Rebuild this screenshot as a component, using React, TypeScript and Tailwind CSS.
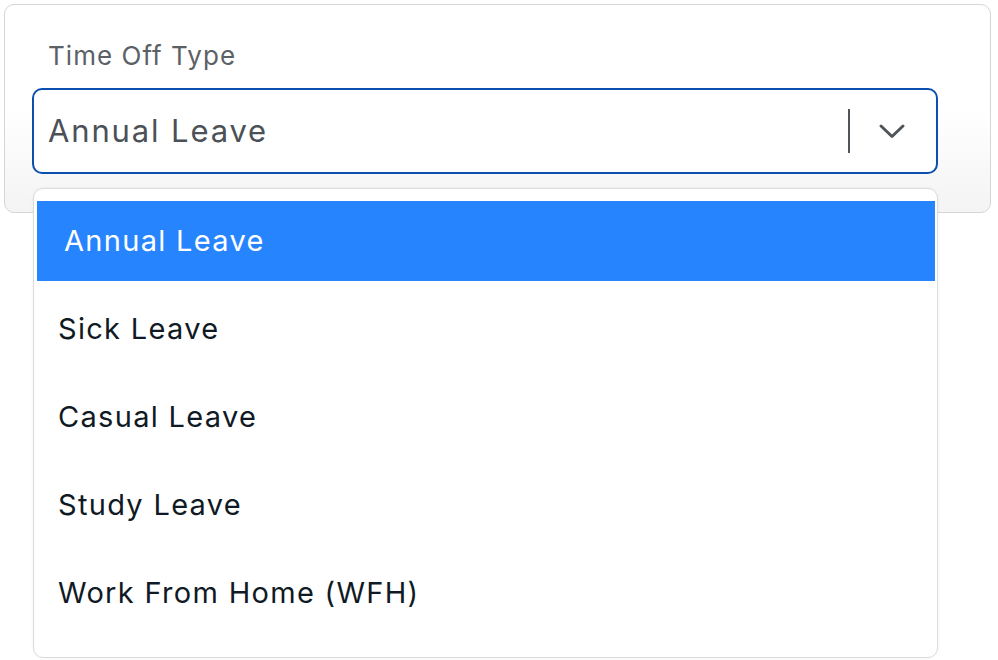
const options = [
  "Annual Leave",
  "Sick Leave",
  "Casual Leave",
  "Study Leave",
  "Work From Home (WFH)",
];

export default function App() {
  const selected = "Annual Leave";

  return (
    <div
      className="relative h-[660px] w-[998px] overflow-hidden bg-white"
      style={{ fontFamily: "Inter, 'Noto Sans', sans-serif" }}
    >
      <div className="ml-1 mt-1 h-[209px] w-[987px] rounded-[10px] border border-[#d6d6d6] bg-gradient-to-b from-white via-white to-[#f4f4f4] px-[27px] pt-[38px]">
        <label className="block pl-[16px] text-[26px] leading-none tracking-[0.04em] text-[#5c6166]">
          Time Off Type
        </label>
        <div className="mt-[19px] flex h-[86px] w-[906px] items-center rounded-[10px] border-2 border-[#0c4fb0] bg-white pl-[14px] pr-[30px]">
          <span className="flex-1 text-[31px] tracking-[0.06em] text-[#4b5157]">
            {selected}
          </span>
          <span className="h-[44px] w-[2px] bg-[#4f5559]" />
          <svg
            className="ml-[28px] h-[20px] w-[28px] text-[#4f5559]"
            viewBox="0 0 28 20"
            fill="none"
            stroke="currentColor"
            strokeWidth={3}
            strokeLinecap="round"
            strokeLinejoin="round"
          >
            <polyline points="3,5 14,15.5 25,5" />
          </svg>
        </div>
      </div>

      <div className="absolute left-[33px] top-[188px] w-[905px] rounded-[10px] border border-[#dcdcdc] bg-white pb-[24px] pl-[3px] pr-[2px] pt-[12px] shadow-[0_0_3px_rgba(0,0,0,0.06)]">
        <ul className="flex flex-col gap-2">
          {options.map((o) => (
            <li
              key={o}
              className={
                o === selected
                  ? "flex h-20 items-center bg-[#2684ff] pl-[27px] text-[29px] tracking-[0.045em] text-white"
                  : "flex h-20 items-center pl-[21px] text-[29px] tracking-[0.045em] text-[#101a24]"
              }
            >
              {o}
            </li>
          ))}
        </ul>
      </div>
    </div>
  );
}
